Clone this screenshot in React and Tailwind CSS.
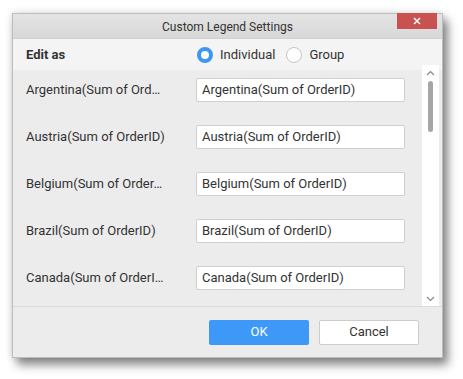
const rows = [
  { label: 'Argentina(Sum of Ord…', value: 'Argentina(Sum of OrderID)' },
  { label: 'Austria(Sum of OrderID)', value: 'Austria(Sum of OrderID)' },
  { label: 'Belgium(Sum of Order…', value: 'Belgium(Sum of OrderID)' },
  { label: 'Brazil(Sum of OrderID)', value: 'Brazil(Sum of OrderID)' },
  { label: 'Canada(Sum of OrderI…', value: 'Canada(Sum of OrderID)' },
];

const Chevron = ({ up }) => (
  <svg width="9" height="6" viewBox="0 0 9 6" fill="none" stroke="#8a8a8a" strokeWidth="1.2">
    {up ? <path d="M1 5 L4.5 1.5 L8 5" /> : <path d="M1 1 L4.5 4.5 L8 1" />}
  </svg>
);

const App = () => {
  return (
    <div className="w-[463px] h-[379px] bg-white overflow-hidden pt-[13px] pl-[12px] font-['Roboto',sans-serif] text-[#333]">
      <div className="w-[431px] h-[345px] flex flex-col bg-[#ececec] border border-[#bdbdbd] shadow-[5px_7px_9px_rgba(0,0,0,0.45),0_0_8px_rgba(0,0,0,0.15)]">
        {/* title bar */}
        <div className="relative h-[25px] shrink-0 flex items-center justify-center bg-gradient-to-b from-[#e4e4e4] to-[#d8d8d8] border-b border-[#d0d0d0]">
          <span className="text-[12px] text-[#333] mt-[1px]">Custom Legend Settings</span>
          <div className="absolute right-[5px] top-[-1px] w-[40px] h-[16px] bg-[#c85250] flex items-center justify-center">
            <svg width="8" height="8" viewBox="0 0 8 8" stroke="white" strokeWidth="1.5">
              <path d="M1 1 L7 7 M7 1 L1 7" />
            </svg>
          </div>
        </div>

        {/* edit as */}
        <div className="h-[31px] shrink-0 flex items-center bg-[#f4f4f4] pl-[13px]">
          <span className="text-[13px] font-bold w-[171px]">Edit as</span>
          <div className="flex items-center">
            <span className="w-[16px] h-[16px] rounded-full border-[4px] border-[#3c96f6] bg-white" />
            <span className="text-[13px] ml-[7px]">Individual</span>
          </div>
          <div className="flex items-center ml-[11px]">
            <span className="w-[16px] h-[16px] rounded-full border border-[#c4c4c4] bg-white" />
            <span className="text-[13px] ml-[7px]">Group</span>
          </div>
        </div>

        {/* body */}
        <div className="flex-1 flex border-b border-[#dadada] pr-[3px]">
          <div className="flex-1 flex flex-col gap-[23px] pt-[8px] pl-[13px]">
            {rows.map((r) => (
              <div key={r.label} className="flex items-center h-[24px]">
                <span className="w-[170px] text-[13px] whitespace-nowrap">{r.label}</span>
                <div className="w-[209px] h-[24px] bg-white border border-[#cfcfcf] rounded-[2px] flex items-center px-[5px] text-[13px]">
                  {r.value}
                </div>
              </div>
            ))}
          </div>
          <div className="w-[17px] -mt-[5px] bg-white flex flex-col items-center pt-[5px] pb-[4px]">
            <Chevron up />
            <div className="w-[5px] h-[51px] mt-[5px] rounded-full bg-[#a6a6a6]" />
            <div className="flex-1" />
            <Chevron />
          </div>
        </div>

        {/* footer */}
        <div className="h-[50px] shrink-0 flex items-center justify-end gap-[10px] pr-[23px]">
          <button className="w-[100px] h-[25px] bg-[#3d98f8] text-white text-[13px] rounded-[2px]">OK</button>
          <button className="w-[100px] h-[25px] bg-white border border-[#cccccc] text-[#333] text-[13px] rounded-[2px]">Cancel</button>
        </div>
      </div>
    </div>
  );
};

export default App;
